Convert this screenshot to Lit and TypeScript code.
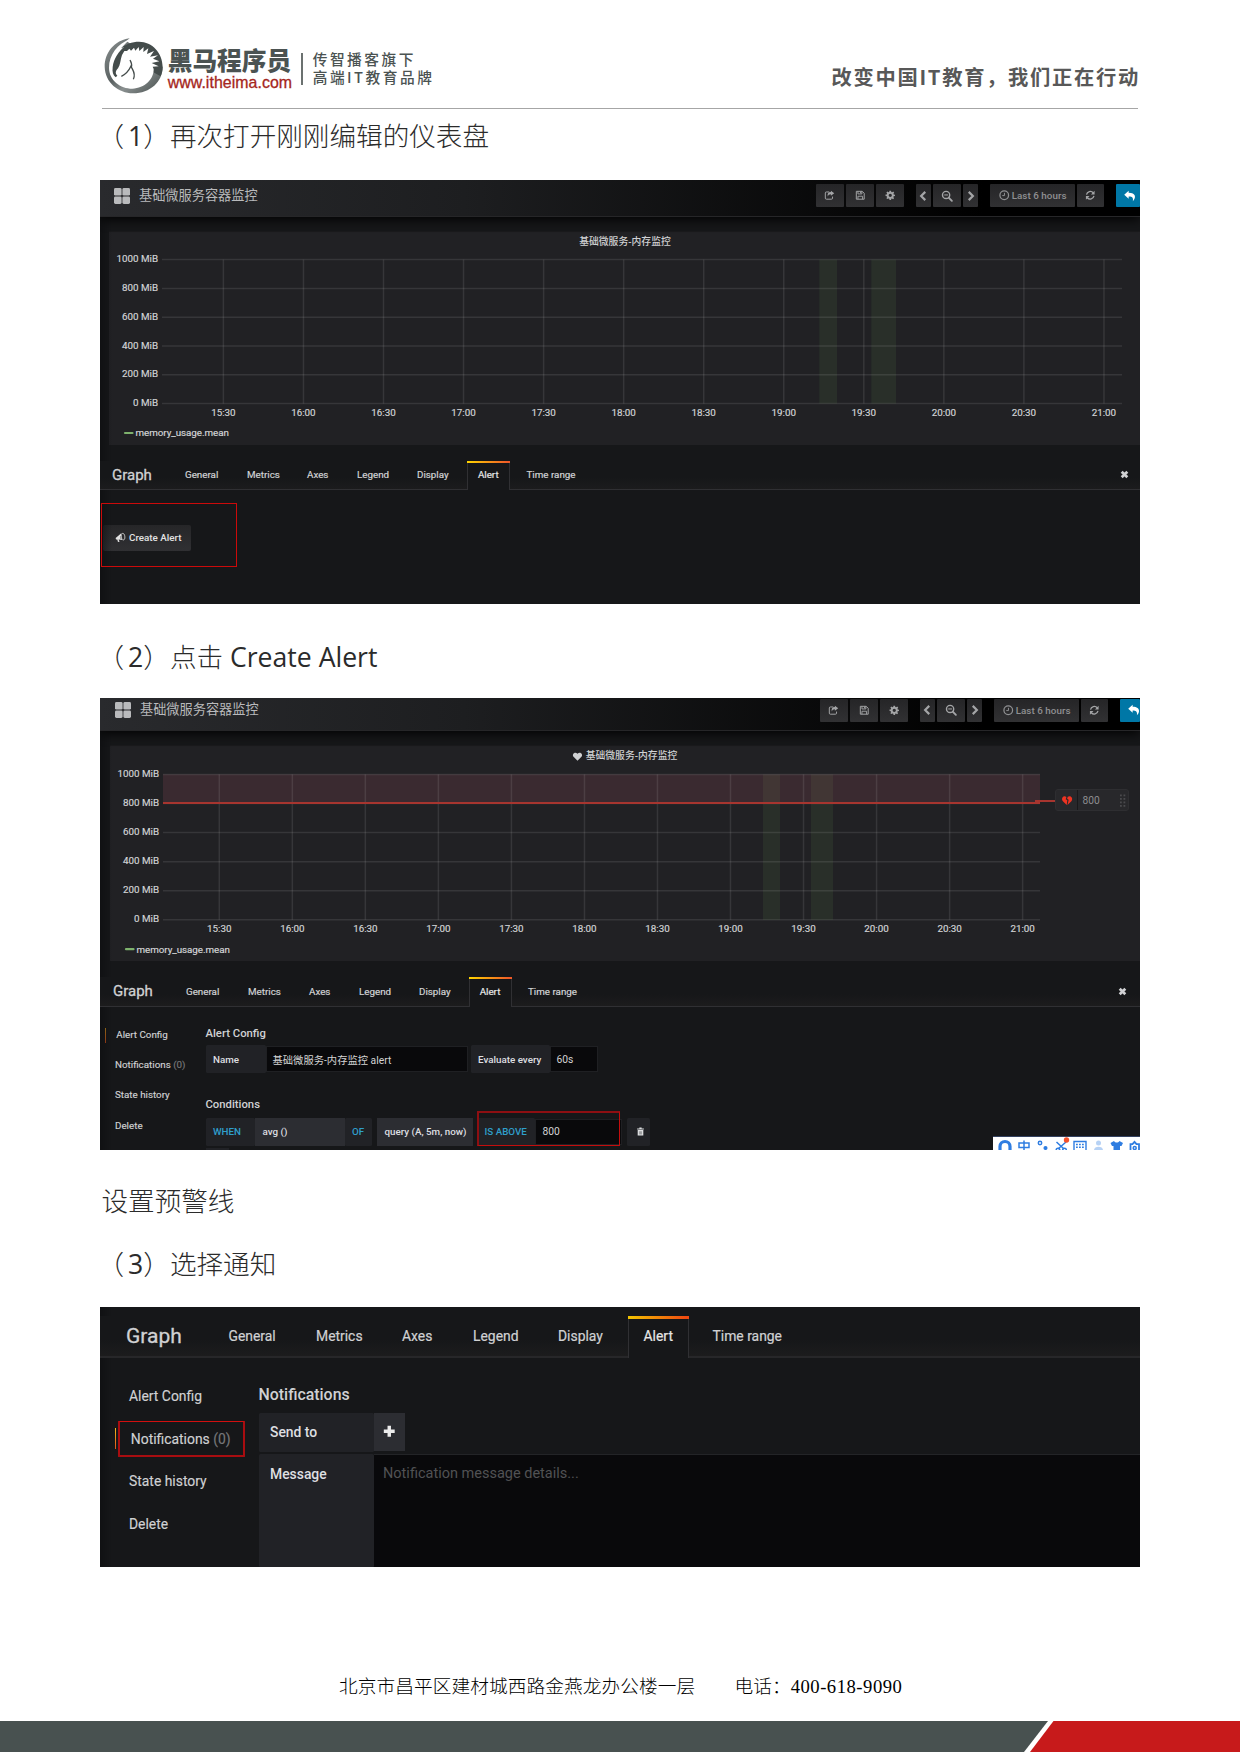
import { LitElement, html, svg, css, nothing } from "lit";
import { customElement, property } from "lit/decorators.js";

const ICONS: Record<string, unknown> = {
  apps: svg`<rect x="0" y="0" width="7.6" height="7.6" rx="1.4"/><rect x="8.4" y="0" width="7.6" height="7.6" rx="1.4"/><rect x="0" y="8.4" width="7.6" height="7.6" rx="1.4"/><rect x="8.4" y="8.4" width="7.6" height="7.6" rx="1.4"/>`,
  share: svg`<path d="M8 3H3.6A1.6 1.6 0 0 0 2 4.600V12.400A1.600 1.600 0 0 0 3.600 14H11.400A1.600 1.600 0 0 0 13 12.400V10" fill="none" stroke="currentColor" stroke-width="1.5"/><path d="M10.500 1 15.600 4.800 10.500 8.600V6.400C8 6.400 6.500 7.400 5.800 10 4.600 6 6.500 3.300 10.500 3.200Z"/>`,
  save: svg`<path d="M2 2H11L14 5V14H2Z" fill="none" stroke="currentColor" stroke-width="1.5" stroke-linejoin="round"/><path d="M4.500 2V6H10.500V2M4.500 14V9.500H11.500V14" fill="none" stroke="currentColor" stroke-width="1.400"/><rect x="7.800" y="2.500" width="1.700" height="2.600"/>`,
  gear: svg`<path fill-rule="evenodd" d="M6.800 1H9.200L9.600 3 10.900 3.600 12.600 2.400 14 4 12.800 5.600 13.300 6.800 15.200 7.100V9.300L13.200 9.600 12.700 10.800 13.800 12.400 12.300 14 10.600 12.800 9.500 13.300 9.200 15.200H6.900L6.500 13.300 5.300 12.800 3.700 13.900 2.100 12.400 3.200 10.700 2.700 9.600 0.800 9.200V7L2.700 6.700 3.200 5.500 2.100 3.900 3.700 2.300 5.300 3.400 6.400 2.900ZM8 5.600A2.500 2.500 0 1 0 8 10.600 2.500 2.500 0 1 0 8 5.600Z"/>`,
  left: svg`<path d="M11 2.500 5.500 8 11 13.500" fill="none" stroke="currentColor" stroke-width="2.900"/>`,
  right: svg`<path d="M5 2.500 10.500 8 5 13.500" fill="none" stroke="currentColor" stroke-width="2.900"/>`,
  zoomout: svg`<circle cx="6.800" cy="6.600" r="4.800" fill="none" stroke="currentColor" stroke-width="1.900"/><path d="M10.300 10.200 14.500 14.400" stroke="currentColor" stroke-width="2.500" stroke-linecap="round"/><path d="M4.300 6.600H9.300" stroke="currentColor" stroke-width="1.400"/>`,
  clock: svg`<circle cx="8" cy="8" r="6.600" fill="none" stroke="currentColor" stroke-width="1.900"/><path d="M8.300 4.300V8.500H5" fill="none" stroke="currentColor" stroke-width="1.500"/>`,
  refresh: svg`<path d="M2.300 7A5.900 5.900 0 0 1 12.500 4.200M13.700 9A5.900 5.900 0 0 1 3.500 11.800" fill="none" stroke="currentColor" stroke-width="1.900"/><path d="M14.600 1.300V6.800H9.100ZM1.400 14.700V9.200H6.900Z"/>`,
  reply: svg`<path d="M6.200 1 0.300 6.300 6.200 11.600V8.700C10.500 8.500 12.800 9.800 11.800 15 16.800 10 15.600 4 6.200 3.800Z"/>`,
  close: svg`<path d="M3 3 13 13M13 3 3 13" stroke="currentColor" stroke-width="4.800"/>`,
  plus: svg`<path d="M8 2V14M2 8H14" stroke="currentColor" stroke-width="3.800"/>`,
  heart: svg`<path d="M8 15.500 1 8.500C-2.500 4.500 3 -2 8 3 13 -2 18.500 4.500 15 8.500Z"/>`,
  broken: svg`<path d="M7.400 15 1 8.600C-1.800 4.800 2.300 -0.800 6.900 2.500L5.800 6.200 8.300 7.700ZM8.600 15 15 8.600C17.800 4.800 13.700 -0.800 9 2.300L8 5.200 10.400 6.800Z"/>`,
  horn: svg`<path d="M1 9 9.500 2 11.500 12 5.500 11.500 7 15 4.500 15.200 3.500 11.500 1.500 11.300Z"/><path d="M10 3C13 0.500 15 4 15 8 15 11 14 12.500 11.800 12" fill="none" stroke="currentColor" stroke-width="1.300"/><path d="M11.600 5.500V10M9 6V10.500" stroke="#2b2b2e" stroke-width="1"/>`,
  trash: svg`<path d="M6 0.800H10V2.500H14V4.500H2V2.500H6Z"/><path fill-rule="evenodd" d="M3 5.500H13V15H3ZM5.300 7.500V13.500H5.900V7.500ZM7.700 7.500V13.500H8.300V7.500ZM10.100 7.500V13.500H10.700V7.500Z"/>`,
};

const icon = (name: string, size: string) =>
  html`<svg class="icon ${size}" viewBox="0 0 16 16" fill="currentColor" aria-hidden="true">${ICONS[name]}</svg>`;

const TIMES = ["15:30", "16:00", "16:30", "17:00", "17:30", "18:00", "18:30", "19:00", "19:30", "20:00", "20:30", "21:00"];
const LEVELS = ["1000 MiB", "800 MiB", "600 MiB", "400 MiB", "200 MiB", "0 MiB"];

interface ChartSpec {
  height: number;
  right: number;
  firstTick: number;
  tickStep: number;
  top: number;
  rowStep: number;
  bands: [number, number][];
  threshold: boolean;
}

const FIRST: ChartSpec = {
  height: 190, right: 1013, firstTick: 114.4, tickStep: 80.05, top: 4.6, rowStep: 28.8,
  bands: [[710.300, 17.700], [762.300, 24.700]], threshold: false,
};
const SECOND: ChartSpec = {
  height: 191, right: 930, firstTick: 109.3, tickStep: 73.03, top: 4.400, rowStep: 29.08,
  bands: [[653, 17], [701, 22]], threshold: true,
};

@customElement("memory-chart")
export class MemoryChart extends LitElement {
  @property({ attribute: false }) spec: ChartSpec = FIRST;

  static styles = css`
    :host { display: block; }
    svg { display: block; overflow: visible; }
    text { font-family: Roboto, sans-serif; font-size: 9.8px; fill: #d2d3d5; stroke: #d2d3d5; stroke-width: .18px; }
    .value { font-size: 10.2px; fill: #8e8e90; stroke: none; }
    .grid { stroke: #c8c8c8; stroke-opacity: .13; stroke-width: 1.5; }
    .band { fill: #4d7040; fill-opacity: .18; }
    .hot { fill: #ea7080; fill-opacity: .13; }
    .limit { stroke: #a7352f; stroke-width: 2; }
    .key { stroke: #7eb26d; stroke-width: 2.2; stroke-linecap: round; }
    .grip { fill: #28282b; stroke: #2e2e31; }
    .alert { fill: #ee3322; }
    .dot { fill: #4a4a4d; }
  `;

  render() {
    const s = this.spec;
    const bottom = s.top + s.rowStep * 5;
    return html`<svg width="1031" height=${s.height} viewBox="0 0 1031 ${s.height}">
      ${s.bands.map(([x, w]) => svg`<rect class="band" x=${x} y=${s.top} width=${w} height=${bottom - s.top}></rect>`)}
      ${s.threshold ? svg`<rect class="hot" x="53" y=${s.top} width=${s.right - 53} height=${s.rowStep}></rect>` : nothing}
      ${LEVELS.map((label, i) => {
        const y = s.top + i * s.rowStep;
        return svg`<line class="grid" x1="53" x2=${s.right} y1=${y} y2=${y}></line>
          <text x="49" y=${y + 2.6} text-anchor="end">${label}</text>`;
      })}
      ${TIMES.map((label, i) => {
        const x = s.firstTick + i * s.tickStep;
        return svg`<line class="grid" x1=${x} x2=${x} y1=${s.top} y2=${bottom}></line>
          <text x=${x} y=${bottom + 12.600} text-anchor="middle">${label}</text>`;
      })}
      <line class="key" x1="16" x2="23.500" y1=${bottom + 29.400} y2=${bottom + 29.400}></line>
      <text x="26.500" y=${bottom + 32.800} textLength="93.500">memory_usage.mean</text>
      ${s.threshold
        ? svg`<line class="limit" x1="53" x2=${s.right} y1=${s.top + s.rowStep - .4} y2=${s.top + s.rowStep - .4}></line>
          <line class="limit" x1="925" x2="946" y1="31" y2="31"></line>
          <rect class="grip" x="945.500" y="19.500" width="73" height="21" rx="2.500"></rect>
          <line x1="967.500" x2="967.500" y1="20" y2="40" stroke="#19191b"></line>
          <g class="alert" transform="translate(952 25.400) scale(.64)">${ICONS.broken}</g>
          <text class="value" x="972.500" y="33.800">800</text>
          ${[24.500, 28, 31.500, 35].map((y) => svg`<rect class="dot" x="1010" y=${y} width="1.800" height="1.800"></rect><rect class="dot" x="1013.500" y=${y} width="1.800" height="1.800"></rect>`)}`
        : nothing}
    </svg>`;
  }
}

const toolbar = () => html`<div class="tools">
  <span class="btn w28">${icon("share", "s11")}</span>
  <span class="btn w28">${icon("save", "s11")}</span>
  <span class="btn w28">${icon("gear", "s11")}</span>
  <span class="btn w15 apart">${icon("left", "s12")}</span>
  <span class="btn w28">${icon("zoomout", "s12")}</span>
  <span class="btn w15">${icon("right", "s12")}</span>
  <span class="btn w84 apart">${icon("clock", "s11")}<span>Last 6 hours</span></span>
  <span class="btn w27">${icon("refresh", "s11")}</span>
  <span class="btn back apart">${icon("reply", "s12")}</span>
</div>`;

const TABS = ["General", "Metrics", "Axes", "Legend", "Display"];
const tabs = (kind: string) => html`<div class="tabs ${kind}">
  <span class="graph">Graph</span>
  ${TABS.map((t) => html`<span class="tab">${t}</span>`)}
  <span class="tab active">Alert</span>
  <span class="tab last">Time range</span>
  ${kind === "big" ? nothing : icon("close", "s10")}
</div>`;

@customElement("app-root")
export class AppRoot extends LitElement {
  static styles = css`
    :host { display: block; }
    * { box-sizing: border-box; }
    .page {
      width: 1240px; height: 1752px; overflow: hidden; background: #fff;
      display: flex; flex-direction: column;
      font-family: Roboto, "Noto Sans CJK SC", sans-serif;
    }
    .icon { display: block; flex: none; overflow: visible; }
    .s10 { width: 9px; height: 9px; }
    .s11 { width: 10.500px; height: 10.500px; }
    .s12 { width: 12px; height: 12px; }
    .s16 { width: 16px; height: 16px; }

    .masthead {
      height: 109px; margin: 0 102px; padding-bottom: 15px; flex: none;
      border-bottom: 1.500px solid #a6a6a6;
      display: flex; align-items: flex-end; color: #4b5352;
    }
    .horse { width: 60.700px; height: 57.300px; margin: 0 4px -1.500px 1px; }
    .brand { display: flex; flex-direction: column; width: 123px; }
    .name { font: 900 24.700px/28px "Noto Sans CJK SC", sans-serif; white-space: nowrap; }
    .site { font: 15.900px/16px "Liberation Sans", sans-serif; color: #a52620; white-space: nowrap; letter-spacing: .05px; -webkit-text-stroke: .3px #a52620; padding: 1.500px 0 2.500px; }
    .rule { width: 1.500px; height: 32px; background: #6b7170; margin: 0 10px 8px 10.500px; }
    .tagline { font: 500 14.700px/18px "Noto Sans CJK SC", sans-serif; letter-spacing: 2.500px; white-space: nowrap; margin-bottom: 7px; }
    .slogan { margin: 0 -2px 3px auto; font: 700 20.300px/28px "Noto Sans CJK SC", sans-serif; letter-spacing: 1.700px; color: #585858; }

    .step { flex: none; margin: 0 101.500px; color: #2b2b2b; white-space: nowrap; display: flex; align-items: center;
      font: 300 26.600px/34px "Open Sans", "Noto Sans CJK SC", sans-serif; }
    .step .latin { font-weight: 400; }
    .open { margin: 0 4px 0 -4px; }
    .h1 { height: 71px; padding-bottom: 18px; }
    .h2 { height: 94px; padding-top: 12px; }
    .h3 { height: 104px; padding-bottom: 2px; }
    .h4 { height: 53px; padding-bottom: 34px; }

    .shot { position: relative; flex: none; width: 1040px; margin-left: 100px; background: #161719; overflow: hidden; color: #d0d1d3; font-size: 9.800px; display: flex; flex-direction: column; }
    .shot::before { content: ""; position: absolute; inset: 0 auto 0 0; width: 12px; background: linear-gradient(90deg, #0c0d0f, transparent); opacity: .6; }
    .one { height: 424px; }
    .two { height: 452px; }
    .three { height: 260px; font-size: 13.900px; }

    .bar { position: relative; height: 37px; flex: none; display: flex; align-items: center; padding: 0 0 5px 14px; border-bottom: 1px solid #262628;
      background: linear-gradient(90deg, #292a2d 0, #1d1e20 35%, #000 85%); box-shadow: 0 2px 12px #000; color: #b9babc; }
    .two .bar { height: 33px; padding: 0 0 8px 15px; }
    .title { font-size: 13.200px; line-height: 18px; margin-left: 9px; }
    .tools { display: flex; gap: 2.200px; margin-left: auto; height: 23px; color: #a4a5a7; }
    .btn { display: flex; align-items: center; justify-content: center; gap: 2.500px; flex: none; background: linear-gradient(#252527, #313133); border-radius: 1px; white-space: nowrap; font-weight: 500; }
    .w28 { width: 28px; } .w15 { width: 15px; } .w84 { width: 84.500px; color: #8f9092; } .w27 { width: 27px; }
    .w84 { letter-spacing: .05px; }
    .apart { margin-left: 9.800px; }
    .back { width: 24px; justify-content: flex-start; padding-left: 8px; background: #0077a6; color: #fff; }
    .two .back { width: 20px; }

    .panel { flex: none; margin: 14px 0 0 9px; background: #212124; height: 214px; border-top: 1px solid #1a1a1c; }
    .two .panel { margin: 14px 0 0 10px; height: 216px; }
    .caption { height: 23px; display: flex; align-items: center; justify-content: center; gap: 4px; padding: 0 0 3px 1px; font-weight: 500; line-height: 14px; }
    .two .caption { height: 24px; padding: 0 0 4px 0; }

    .tabs { position: relative; display: grid; align-items: center; flex: none; line-height: 14px; height: 29px; padding-left: 12px; border-bottom: 1px solid #303033;
      grid-template-columns: 73px 62px 60px 50px 60px 50px 42.500px 1fr auto; margin-top: 16px; background: linear-gradient(#161719 60%, #1c1c1d); }
    .graph { font-size: 15px; line-height: 20px; -webkit-text-stroke: .3px; margin-bottom: 1px; }
    .tab { white-space: nowrap; -webkit-text-stroke: .2px; }
    .tab.active { align-self: stretch; justify-self: stretch; display: flex; align-items: center; justify-content: center; margin-bottom: -1px;
      background: #161719; border: 1px solid #303033; border-width: 0 1px; color: #e6e6e6; padding-bottom: 1px; position: relative; }
    .tab.active::before { content: ""; position: absolute; inset: 0 -1px auto; height: 1.600px; background: linear-gradient(90deg, #ffd500, #f05a28 95%); }
    .tab.last { padding-left: 17px; }
    .tabs .icon { margin: 0 11.500px 1px 0; }
    .mid { padding-left: 13px; grid-template-columns: 73px 62px 61px 50px 60px 49.500px 43px 1fr auto; height: 30px; margin-top: 16px; }
    .mid .tab.last { padding-left: 16.500px; }
    .mid .icon { margin-right: 13.500px; }
    .big { height: 42px; margin-top: 9px; padding-left: 26px; line-height: 20px; border-bottom: 2px solid #272729;
      grid-template-columns: 102.500px 87.500px 86px 71px 85px 70px 60.500px 1fr; }
    .big .graph { font-size: 21px; line-height: 26px; }
    .big .tab.active { margin-bottom: -2px; padding-bottom: 2px; }
    .big .tab.active::before { height: 3px; background: linear-gradient(90deg, #f2c500, #f04a10 95%); }
    .big .tab.last { padding-left: 24px; }

    .create { margin: 34.500px 0 0 3px; width: 88px; height: 26px; background: linear-gradient(#262628, #303033); border-radius: 2px; display: flex; align-items: center; gap: 3.500px; padding: 0 0 1px 12px; font-weight: 500; color: #e3e3e3; white-space: nowrap; }
    .mark { position: absolute; border: 1.200px solid #cc0a0a; }
    .mark-create { left: 1px; top: 323px; width: 136px; height: 64px; }
    .mark-cond { left: 377px; top: 413px; width: 143px; height: 35px; border: 1px solid #c40d0d; border-top: 2px solid #8d0f12; border-left: 2px solid #8d0f12; }
    .mark-note { left: 18px; top: 114px; width: 127px; height: 36px; border: 2px solid #a80d10; border-top: 1px solid #d20f0f; border-radius: 1px; }

    .config { display: flex; flex: 1; min-height: 0; }
    .side { display: flex; flex-direction: column; width: 105.500px; padding: 13px 0 0 5px; flex: none; -webkit-text-stroke: .15px; }
    .side span { height: 30.200px; line-height: 30px; padding-left: 10px; display: flex; align-items: center; white-space: pre; }
    .side i { font-style: normal; color: #77787a; }
    .side .on::before { content: ""; width: 1.300px; height: 15px; margin: 0 10px 0 -10px; background: linear-gradient(#c98d1a, #c44a1a); }
    .form { display: flex; flex-direction: column; }
    .form h4 { margin: 0; font-weight: 500; font-size: 11.300px; line-height: 16px; white-space: nowrap; }
    .form h4.top { margin-top: 19px; }
    .form h4.next { margin: 24px 0 4.500px; }
    .row { display: flex; align-items: center; height: 28px; flex: none; }
    .top + .row { margin-top: 3px; }
    .label { background: #212226; height: 28px; display: flex; align-items: center; padding-left: 7.500px; font-weight: 500; border-radius: 1.500px; white-space: nowrap; color: #dedfe1; }
    .input { background: #09090b; height: 26px; border: 1px solid #1f2023; display: flex; align-items: center; padding-left: 6px; color: #d4d4d4; white-space: nowrap; font-size: 10.300px; }
    .sel { background: #2c2d32; border-radius: 0; padding-left: 8px; }
    .blue { color: #2f9fcb; }
    .c60 { width: 60px; } .c202 { width: 202px; margin-right: 3px; } .c79 { width: 79px; } .c48 { width: 48px; }
    .c49 { width: 49px; } .c90 { width: 90px; } .c27 { width: 27.500px; margin-right: 4.500px; } .c96 { width: 96.500px; margin-right: 4px; } .c57 { width: 57.500px; } .c86 { width: 87px; margin-right: 5.500px; padding-left: 7px; } .c23 { width: 23px; }
    .c23 .icon { margin-left: 1px; }
    .stub { width: 23px; height: 10px; background: #212226; margin-top: 2px; }

    .ime { position: absolute; right: 0; bottom: 0; width: 147px; height: 14px; background: #fff; border-top: 1px solid #33415f; display: block; }

    .three .side { width: 158.500px; padding: 17px 0 0 15px; }
    .three .side span { height: 42.500px; line-height: 42px; padding-left: 14px; }
    .three .side .on { padding-left: 16px; }
    .three .side .on::before { height: 21px; margin: 0 14.500px 0 -16px; background: linear-gradient(#f0b81c, #e0521c); }
    .three .form { flex: 1; }
    .three h4.top { font-size: 15.900px; line-height: 22px; margin: 26px 0 7px; }
    .send { display: flex; height: 39px; }
    .three .label { height: 39px; width: 115px; padding: 0 0 2px 11.500px; font-size: 13.900px; }
    .add { width: 31px; height: 38px; background: #2c2d32; display: flex; align-items: center; justify-content: center; color: #ececec; }
    .three .add .icon { width: 14.500px; height: 14.500px; margin-bottom: 1px; }
    .message { display: flex; flex: 1; margin-top: 2px; }
    .three .message .label { height: auto; align-items: flex-start; padding-top: 11px; line-height: 18px; }
    .area { flex: 1; background: #09090b; border-top: 1.500px solid #232427; padding: 9px 0 0 9.500px; line-height: 20px; font-size: 14.500px; color: #515254; }

    .contact { flex: none; margin-top: 105px; height: 29px; display: flex; align-items: center; padding-left: 339px; color: #000; white-space: pre;
      font: 300 18.670px/28px "Liberation Serif", "Noto Sans CJK SC", serif; letter-spacing: .1px; }
    .contact .tel { margin-left: 39px; }
    .contact .num { font-weight: 400; letter-spacing: .5px; }
    .base { margin-top: auto; display: block; flex: none; }
  `;

  private masthead() {
    return html`<header class="masthead">
      <svg class="horse" viewBox="40 50 182 172">
        <defs><linearGradient id="ring" x1="0" y1="0" x2="1" y2="1"><stop offset="0" stop-color="#8a9090"/><stop offset=".45" stop-color="#5a6161"/><stop offset=".62" stop-color="#8a9090"/><stop offset="1" stop-color="#444c4b"/></linearGradient></defs>
        <path fill="url(#ring)" d="M120 54C74 60 44 98 45 140C46 186 86 219 130 219C182 219 219 184 219 140L196 120 110 62Z"/>
        <path fill="#444c4b" d="M90 88C106 71 128 64 148 64C188 64 219 98 219 140C219 150 216 160 213 168L180 150 120 100Z"/>
        <path fill="#fff" d="M120 57C84 70 58 104 58 142C58 180 92 205 128 205C165 204 193 176 192 146L189 139 207 138 186 128 209 123 190 115 205 105 181 109 193 92 172 101 176 84 161 95 162 80 149 92 147 80 137 91 133 82 124 91 119 85 112 92 100 92 104 80 94 84Z"/>
        <path fill="#444c4b" d="M108 76C86 92 72 116 69 140C67 155 70 164 78 171L83 166C76 160 77 152 85 144C92 134 92 118 97 104L104 92Z"/>
        <path fill="none" stroke="#444c4b" stroke-width="4" d="M95 168C108 162 118 150 124 137C128 150 140 158 131 177M125 141C128 132 125 126 121 119"/>
      </svg>
      <div class="brand"><span class="name">黑马程序员</span><span class="site">www.itheima.com</span></div>
      <span class="rule"></span>
      <div class="tagline">传智播客旗下<br>高端IT教育品牌</div>
      <div class="slogan">改变中国IT教育，我们正在行动</div>
    </header>`;
  }

  private ime() {
    return html`<svg class="ime" viewBox="0 0 147 13" fill="none" stroke="#2f7de1" stroke-width="1.500">
      <path d="M7 14.500V9.500A5 5 0 0 1 17 9.500V14.500" stroke-width="3.200"/>
      <path d="M26 6H36V10.500H26ZM31 3.500V13"/>
      <circle cx="47" cy="6" r="1.700"/><circle cx="52.500" cy="11" r="1.300" fill="#2f7de1"/>
      <path d="M63.500 5 71 12M73 5 65 12"/><circle cx="65" cy="13" r="1.800"/><circle cx="71.500" cy="13" r="1.800"/>
      <circle cx="73.500" cy="3" r="2.700" fill="#f4502a" stroke="none"/>
      <path d="M81 14V4.500H93V14" stroke-width="1.400"/><path d="M83 7.500H91M83 10.200H91" stroke-width="1.500" stroke-dasharray="1.800 1.200"/>
      <g fill="#b7d2f5" stroke="none"><circle cx="105.500" cy="6" r="2.500"/><path d="M101 13C101 8.500 110 8.500 110 13Z"/></g>
      <path fill="#2f7de1" stroke="none" d="M117.500 6 121 4C122.500 6 125 6 126.500 4L130 6 128.500 9H127V13H120.500V9H119Z"/>
      <path d="M137.500 13.500V7.200H139.500L141.500 4.800 143.500 7.200H146V13.500" stroke-width="1.800"/><circle cx="141.700" cy="11" r="1.500"/>
    </svg>`;
  }

  render() {
    return html`<main class="page">
      ${this.masthead()}
      <div class="step h1"><span class="open">（</span><span class="latin">1</span><span>）再次打开刚刚编辑的仪表盘</span></div>

      <section class="shot one">
        <div class="bar">${icon("apps", "s16")}<span class="title">基础微服务容器监控</span>${toolbar()}</div>
        <div class="panel"><div class="caption">基础微服务-内存监控</div><memory-chart .spec=${FIRST}></memory-chart></div>
        ${tabs("small")}
        <div class="create">${icon("horn", "s11")}<span>Create Alert</span></div>
        <div class="mark mark-create"></div>
      </section>

      <div class="step h2"><span class="open">（</span><span class="latin">2</span><span>）点击</span><span class="latin">&nbsp;Create Alert</span></div>

      <section class="shot two">
        <div class="bar">${icon("apps", "s16")}<span class="title">基础微服务容器监控</span>${toolbar()}</div>
        <div class="panel"><div class="caption">${icon("heart", "s10")}<span>基础微服务-内存监控</span></div><memory-chart .spec=${SECOND}></memory-chart></div>
        ${tabs("mid")}
        <div class="config">
          <nav class="side"><span class="on">Alert Config</span><span>Notifications <i>(0)</i></span><span>State history</span><span>Delete</span></nav>
          <div class="form">
            <h4 class="top">Alert Config</h4>
            <div class="row"><span class="label c60">Name</span><span class="input c202">基础微服务-内存监控 alert</span><span class="label c79">Evaluate every</span><span class="input c48">60s</span></div>
            <h4 class="next">Conditions</h4>
            <div class="row"><span class="label blue c49">WHEN</span><span class="label sel c90">avg ()</span><span class="label blue c27">OF</span><span class="label sel c96">query (A, 5m, now)</span><span class="label blue c57">IS ABOVE</span><span class="input c86">800</span><span class="label c23">${icon("trash", "s10")}</span></div>
            <div class="stub"></div>
          </div>
        </div>
        <div class="mark mark-cond"></div>
        ${this.ime()}
      </section>

      <div class="step h3">设置预警线</div>
      <div class="step h4"><span class="open">（</span><span class="latin">3</span><span>）选择通知</span></div>

      <section class="shot three">
        ${tabs("big")}
        <div class="config">
          <nav class="side"><span>Alert Config</span><span class="on">Notifications <i>(0)</i></span><span>State history</span><span>Delete</span></nav>
          <div class="form">
            <h4 class="top">Notifications</h4>
            <div class="send"><span class="label">Send to</span><span class="add">${icon("plus", "s16")}</span></div>
            <div class="message"><span class="label">Message</span><div class="area">Notification message details...</div></div>
          </div>
        </div>
        <div class="mark mark-note"></div>
      </section>

      <footer class="contact"><span>北京市昌平区建材城西路金燕龙办公楼一层</span><span class="tel">电话：</span><span class="num">400-618-9090</span></footer>
      <svg class="base" width="1240" height="31" viewBox="0 0 1240 31">
        <path fill="#485150" d="M0 0H1048L1024 31H0Z"/><path fill="#c71a1b" d="M1053.500 0H1240V31H1030Z"/>
      </svg>
    </main>`;
  }
}
